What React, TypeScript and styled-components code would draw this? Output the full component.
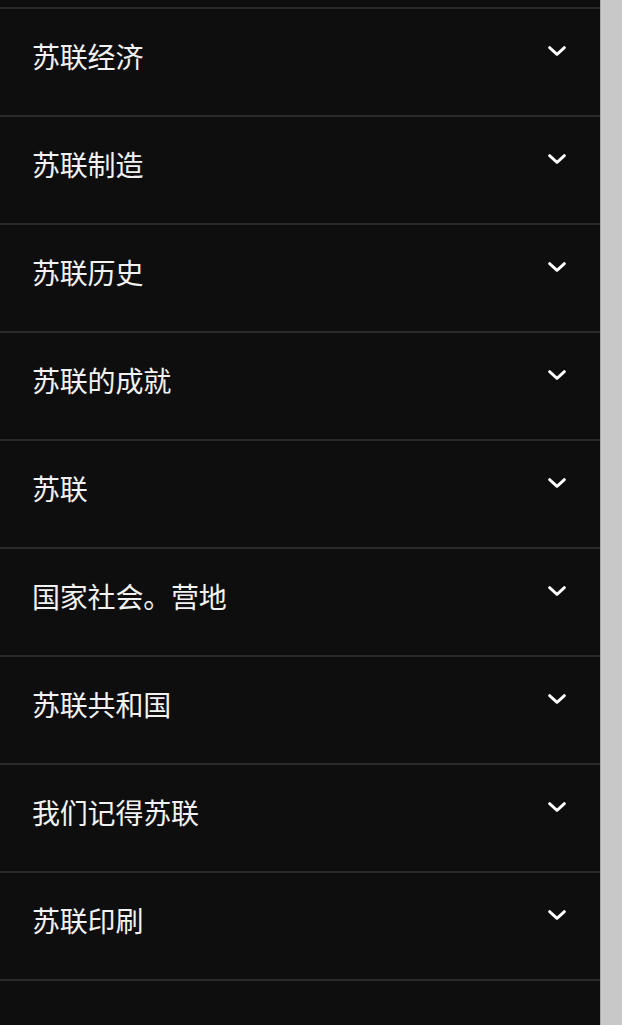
import React from "react";
import styled, { createGlobalStyle } from "styled-components";

const Global = createGlobalStyle`
  html, body { margin: 0; padding: 0; background: #0e0e0e; }
  body { font-family: "Noto Sans CJK SC", "Noto Sans", sans-serif; overflow: hidden; }
`;

const Page = styled.div`
  display: flex;
  height: 1025px;
  overflow: hidden;
`;

const List = styled.div`
  flex: 1;
  display: flex;
  flex-direction: column;
  background: #0e0e0e;
`;

const Tail = styled.div`
  height: 7px;
  flex-shrink: 0;
`;

const Row = styled.div`
  flex-shrink: 0;
  height: 108px;
  box-sizing: border-box;
  border-top: 2px solid #2a2a2a;
  display: flex;
  align-items: flex-start;
  justify-content: space-between;
  padding: 27px 34px 0 32px;
`;

const Label = styled.span`
  color: #f2f2f2;
  font-size: 28px;
  line-height: 40px;
  letter-spacing: -0.2px;
`;

const Chevron = styled.svg`
  width: 18px;
  height: 10px;
  margin-top: 10px;
  flex-shrink: 0;
`;

const ScrollTrack = styled.div`
  width: 21px;
  background: #c8c8c8;
  border-left: 1px solid #a9a9a9;
  flex-shrink: 0;
`;

const items = [
  "苏联经济",
  "苏联制造",
  "苏联历史",
  "苏联的成就",
  "苏联",
  "国家社会。营地",
  "苏联共和国",
  "我们记得苏联",
  "苏联印刷",
];

export default function App() {
  return (
    <>
      <Global />
      <Page>
        <List>
          <Tail />
          {items.map((t) => (
            <Row key={t}>
              <Label>{t}</Label>
              <Chevron viewBox="0 0 18 10">
                <path
                  d="M1.6 1.6 L9 8.4 L16.4 1.6"
                  fill="none"
                  stroke="#ffffff"
                  strokeWidth="2.8"
                  strokeLinecap="round"
                  strokeLinejoin="round"
                />
              </Chevron>
            </Row>
          ))}
          <Row />
        </List>
        <ScrollTrack />
      </Page>
    </>
  );
}
